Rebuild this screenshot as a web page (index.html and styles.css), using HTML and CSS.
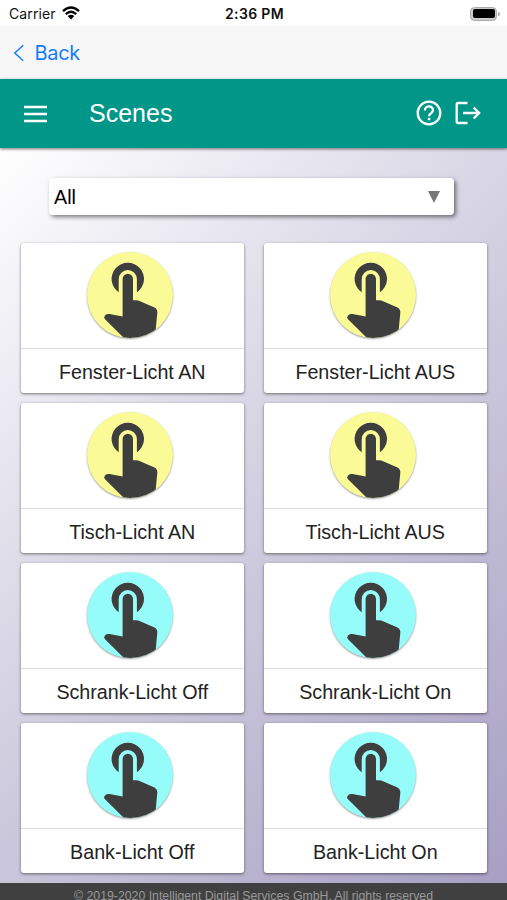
FILE: index.html
```html
<!DOCTYPE html>
<html lang="en">
<head>
<meta charset="utf-8">
<title>Scenes</title>
<link rel="stylesheet" href="styles.css">
</head>
<body>
<svg class="defs" aria-hidden="true">
  <symbol id="touch" viewBox="0 0 86 86">
    <path d="M31.7 40.3A16.2 16.2 0 1 1 49.9 40.3V27.2a9.1 9.1 0 0 0-18.2 0Z"/>
    <path d="M35.6 27a5.2 5.2 0 0 1 10.4 0V48.2H49.5Q51 48.3 52.5 49L67.5 55.6Q70.7 57.4 70.3 61L68.5 80V86H37L18 67.3Q16.2 65.4 18 63.4Q19.8 61.6 22.5 62L35.6 64.4Z"/>
  </symbol>
</svg>
<header class="status">
  <div class="carrier"><span>Carrier</span>
    <svg class="wifi" viewBox="0 0 18 14"><g fill="none" stroke="#000" stroke-width="2.3"><path d="M1 5.1Q9-2.2 17 5.1"/><path d="M3.8 8.1Q9 3.4 14.2 8.1"/></g><path d="M9 13.4 5.7 10.1Q9 7.2 12.3 10.1Z"/></svg>
  </div>
  <div class="time">2:36 PM</div>
  <div class="battery"><i></i></div>
</header>
<nav class="back">
  <svg viewBox="0 0 12 18"><path d="M10.3 1.2 1.8 9l8.5 7.8" fill="none" stroke="currentColor" stroke-width="1.5"/></svg>
  <span>Back</span>
</nav>
<div class="bar">
  <svg class="menu" viewBox="0 0 24 18"><path d="M0 2h23M0 9h23M0 16h23" stroke="currentColor" stroke-width="2.4"/></svg>
  <h1>Scenes</h1>
  <svg class="help" viewBox="0 0 26 26"><g fill="none" stroke="currentColor" stroke-width="2.3"><circle cx="13" cy="13" r="11.3"/><path d="M8.9 10.4C8.9 5 17 5 17 10.2c0 3.2-4 3.2-4 6.1"/></g><path d="M11.8 17.8h2.5v2.4h-2.5z" fill="currentColor"/></svg>
  <svg class="exit" viewBox="0 0 26 24"><path d="M12.5 2H3.2Q1.7 2 1.7 3.5v17Q1.7 22 3.2 22h9.3M8 12h16M18.7 6.5 24.2 12l-5.5 5.5" fill="none" stroke="currentColor" stroke-width="2.3"/></svg>
</div>
<main>
  <div class="select"><span>All</span><i></i></div>
  <div class="grid">
    <article class="card"><div class="pic"><svg class="dot yellow"><use href="#touch"/></svg></div><p>Fenster-Licht AN</p></article>
    <article class="card"><div class="pic"><svg class="dot yellow"><use href="#touch"/></svg></div><p>Fenster-Licht AUS</p></article>
    <article class="card"><div class="pic"><svg class="dot yellow"><use href="#touch"/></svg></div><p>Tisch-Licht AN</p></article>
    <article class="card"><div class="pic"><svg class="dot yellow"><use href="#touch"/></svg></div><p>Tisch-Licht AUS</p></article>
    <article class="card"><div class="pic"><svg class="dot cyan"><use href="#touch"/></svg></div><p>Schrank-Licht Off</p></article>
    <article class="card"><div class="pic"><svg class="dot cyan"><use href="#touch"/></svg></div><p>Schrank-Licht On</p></article>
    <article class="card"><div class="pic"><svg class="dot cyan"><use href="#touch"/></svg></div><p>Bank-Licht Off</p></article>
    <article class="card"><div class="pic"><svg class="dot cyan"><use href="#touch"/></svg></div><p>Bank-Licht On</p></article>
  </div>
</main>
<footer>© 2019-2020 Intelligent Digital Services GmbH. All rights reserved</footer>
</body>
</html>
```
FILE: styles.css
```css
* { box-sizing: border-box; }
body {
  margin: 0;
  height: 900px;
  overflow: hidden;
  display: flex;
  flex-direction: column;
  font-family: "Liberation Sans", Arial, sans-serif;
  background: #fff;
}
svg { display: block; flex: none; }
.defs { display: none; }
.status {
  height: 26px;
  flex: none;
  display: grid;
  grid-template-columns: 1fr auto 1fr;
  align-items: center;
  padding: 1px 7px 0 9px;
  font: 14px/24px Inter, sans-serif;
  color: #111;
}
.carrier { display: flex; align-items: center; gap: 6px; letter-spacing: .1px; }
.wifi { width: 18px; height: 14px; margin-top: -1px; }
.time { font-weight: 600; font-size: 14px; letter-spacing: .35px; }
.battery {
  justify-self: end;
  width: 27px;
  height: 14px;
  margin-right: 3px;
  padding: 1.5px;
  border: 1px solid #aaa;
  border-radius: 4.5px;
  background: #ccc;
  position: relative;
}
.battery i { display: block; height: 100%; border-radius: 2px; background: #000; }
.battery::after {
  content: "";
  position: absolute;
  right: -4px;
  top: 4px;
  width: 2px;
  height: 4px;
  border-radius: 0 2px 2px 0;
  background: #aaa;
}
.back {
  height: 53px;
  flex: none;
  display: flex;
  align-items: center;
  gap: 9.5px;
  padding: 0 13px;
  background: #f7f7f7;
  color: #147efb;
  font: 20px/24px Inter, sans-serif;
  letter-spacing: -.3px;
}
.back svg { width: 12px; height: 18px; }
.bar {
  height: 69px;
  flex: none;
  display: flex;
  align-items: center;
  padding: 0 26px 0 24px;
  background: #009688;
  color: #fff;
  box-shadow: 0 1px 3px rgba(0, 0, 0, .55);
  z-index: 1;
}
.menu { width: 24px; height: 18px; margin-top: 1px; }
.bar h1 {
  margin: 0 auto 0 41px;
  font-size: 25px;
  font-weight: 400;
}
.help { width: 26px; height: 26px; margin: -1px 13px 0 0; }
.exit { width: 26px; height: 24px; margin-top: -1px; }
main {
  height: 735px;
  flex: none;
  padding: 30px 20px 0 20.5px;
  background: linear-gradient(135deg, #fff 0%, #d3d0e1 47%, #a69fc2 100%);
}
.select {
  height: 37px;
  margin: 0 33px 0 28.5px;
  padding: 1px 14px 0 5px;
  display: flex;
  align-items: center;
  justify-content: space-between;
  border-radius: 4px;
  background: #fff;
  box-shadow: 2px 2px 4px rgba(0, 0, 0, .5);
  font-size: 19.7px;
}
.select i {
  border: 6.5px solid transparent;
  border-top: 12px solid #777;
  border-bottom: 0;
}
.grid {
  display: grid;
  grid-template-columns: 223.5px 223.5px;
  gap: 10px 19.5px;
  margin-top: 28px;
}
.card {
  height: 150px;
  border-radius: 3px;
  background: #fff;
  box-shadow: 0 1px 3px rgba(0, 0, 0, .5);
}
.pic {
  height: 106px;
  padding: 9px 0 0 66.5px;
  border-bottom: 1px solid #ddd;
}
.dot {
  width: 86px;
  height: 86px;
  border-radius: 50%;
  fill: #3e3e3e;
  box-shadow: 0 1px 2px rgba(0, 0, 0, .4);
}
.yellow { background: #fafa96; }
.cyan { background: #96fcfa; }
.card p {
  margin: 0;
  text-align: center;
  font-size: 19.7px;
  line-height: 46px;
  color: #222;
}
footer {
  height: 17px;
  flex: none;
  overflow: hidden;
  background: #404040;
  color: #999;
  font-size: 12.3px;
  line-height: 26px;
  text-align: center;
  white-space: nowrap;
}
```
